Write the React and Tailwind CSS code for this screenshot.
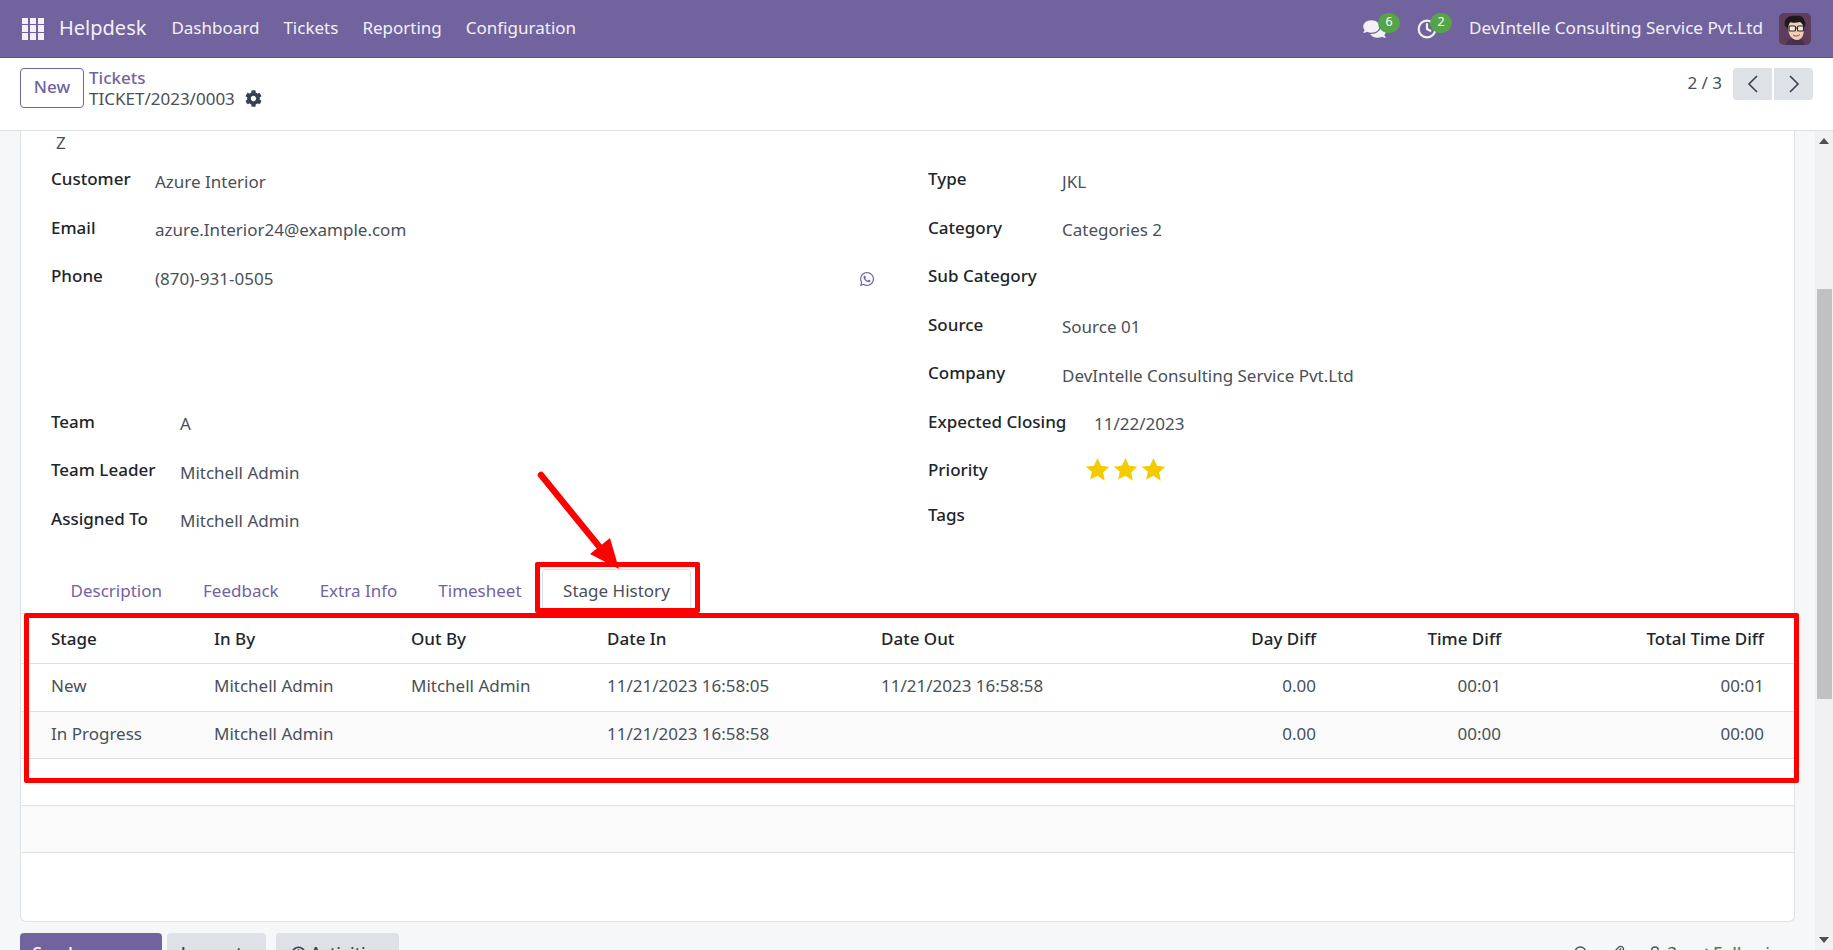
import React from "react";
import { Search, Paperclip, UserRound, Check, Clock } from "lucide-react";
import { FaWhatsapp, FaCog, FaComments } from "react-icons/fa";

const menu = ["Dashboard", "Tickets", "Reporting", "Configuration"];

const leftTop = [
  ["Customer", "Azure Interior"],
  ["Email", "azure.Interior24@example.com"],
  ["Phone", "(870)-931-0505"],
];

const leftBottom = [
  ["Team", "A"],
  ["Team Leader", "Mitchell Admin"],
  ["Assigned To", "Mitchell Admin"],
];

const rightRows = [
  ["Type", "JKL"],
  ["Category", "Categories 2"],
  ["Sub Category", ""],
  ["Source", "Source 01"],
  ["Company", "DevIntelle Consulting Service Pvt.Ltd"],
];

const tabs = ["Description", "Feedback", "Extra Info", "Timesheet"];

const historyRows = [
  ["New", "Mitchell Admin", "Mitchell Admin", "11/21/2023 16:58:05", "11/21/2023 16:58:58", "0.00", "00:01", "00:01"],
  ["In Progress", "Mitchell Admin", "", "11/21/2023 16:58:58", "", "0.00", "00:00", "00:00"],
];

const Star = () => (
  <svg viewBox="0 0 24 24" className="w-[25px] h-[25px] fill-[#f3cc00]">
    <path d="M12 1l3.4 7.3 7.9 1-5.8 5.5 1.5 7.9L12 17.9l-7 3.8 1.5-7.9L.7 9.3l7.9-1z" />
  </svg>
);

const AppsIcon = () => (
  <div className="grid grid-cols-3 gap-[1.5px] w-[22px] h-[22px]">
    {Array.from({ length: 9 }).map((_, i) => (
      <div key={i} className="bg-[#f3f1f7]" />
    ))}
  </div>
);

const Avatar = () => (
  <svg viewBox="0 0 32 32" className="w-[32px] h-[32px] rounded-[5px]">
    <rect width="32" height="32" fill="#5f3b5c" />
    <path d="M7 32c1-5 5-7 9-7s9 2 10 7z" fill="#46304d" />
    <path d="M9 14c0 8 4 13 9 13s7-5 7-12c0-5-3-7-8-7s-8 2-8 6z" fill="#f3cdb4" />
    <path d="M6 13C4 6 10 2 16 3c3-1 9 0 9 4 2 2 2 5 0 8-1-3-2-5-4-6-4 1-8 1-10 0-1 2-2 4-2 7-1-1-2-2-3-3z" fill="#1d1a1e" />
    <rect x="10" y="13" width="6.5" height="5" rx="1" fill="#f8ead9" stroke="#2a2a2a" strokeWidth="1.2" />
    <rect x="18.5" y="13" width="6" height="5" rx="1" fill="#f8ead9" stroke="#2a2a2a" strokeWidth="1.2" />
    <path d="M16.5 15h2" stroke="#2a2a2a" strokeWidth="1" />
    <path d="M14 22c2 1.5 5 1.5 7-.5" stroke="#8b4a3f" strokeWidth="1" fill="none" />
  </svg>
);

const Field = ({ label, value, labelWidth, children }) => (
  <div className="flex h-[48.5px] items-center">
    <div className={`${labelWidth} shrink-0 font-medium text-[#212529] -mt-[5px]`}>{label}</div>
    <div className="flex-1 text-[#495057]">{value}{children}</div>
  </div>
);

const App = () => {
  return (
    <div className="h-screen w-full overflow-hidden flex flex-col bg-white text-[17px] font-['Noto_Sans',sans-serif]">
      {/* navbar */}
      <div className="h-[58px] shrink-0 bg-[#71639e] border-b border-[#5f5385] flex items-center text-[#f3f1f7]">
        <div className="pl-[22px]"><AppsIcon /></div>
        <div className="ml-[15px] pb-[2px] text-[20px]">Helpdesk</div>
        <div className="ml-[25px] pb-[2px] flex gap-[24px]">
          {menu.map((m) => (
            <div key={m}>{m}</div>
          ))}
        </div>
        <div className="ml-auto flex items-center pr-[22px]">
          <div className="relative w-[22px] h-[20px]">
            <FaComments className="w-[23px] h-[20px] text-[#f3f1f7]" />
            <div className="absolute -top-[6px] left-[15px] w-[22px] h-[20px] rounded-full bg-[#55a548] text-white text-[12.5px] flex items-center justify-center">6</div>
          </div>
          <div className="relative w-[22px] h-[20px] ml-[32px]">
            <Clock className="w-[20px] h-[20px] text-[#f3f1f7]" strokeWidth={2.6} />
            <div className="absolute -top-[6px] left-[13px] w-[22px] h-[20px] rounded-full bg-[#55a548] text-white text-[12.5px] flex items-center justify-center">2</div>
          </div>
          <div className="ml-[30px] pb-[2px] text-[17.14px]">DevIntelle Consulting Service Pvt.Ltd</div>
          <div className="ml-[16px]"><Avatar /></div>
        </div>
      </div>

      {/* control panel */}
      <div className="h-[73px] shrink-0 border-b border-[#dee2e6] flex items-start pt-[10px] pl-[20px] pr-[20px]">
        <button className="w-[64px] h-[40px] pb-[2px] rounded-[4px] border border-[#71639e] text-[#71639e] font-medium">New</button>
        <div className="ml-[5px] leading-[21px] mt-[-1px]">
          <div className="text-[#71639e] font-medium">Tickets</div>
          <div className="flex items-center text-[#495057]">
            TICKET/2023/0003
            <FaCog className="ml-[10px] w-[17px] h-[17px] text-[#374151]" />
          </div>
        </div>
        <div className="ml-auto flex items-center">
          <div className="text-[#495057] mr-[11px] -mt-[2px]">2 / 3</div>
          <div className="w-[39px] h-[32px] bg-[#dee2e6] rounded-l-[4px] flex items-center justify-center">
            <svg viewBox="0 0 12 18" className="w-[12px] h-[18px] fill-none stroke-[#374151] stroke-[1.6]"><path d="M10 1L2 9l8 8" /></svg>
          </div>
          <div className="ml-[2px] w-[39px] h-[32px] bg-[#dee2e6] rounded-r-[4px] flex items-center justify-center">
            <svg viewBox="0 0 12 18" className="w-[12px] h-[18px] fill-none stroke-[#374151] stroke-[1.6]"><path d="M2 1l8 8-8 8" /></svg>
          </div>
        </div>
      </div>

      {/* content */}
      <div className="flex-1 min-h-0 flex overflow-hidden">
        <div className="flex-1 min-w-0 bg-[#f6f7f9] px-[20px] relative">
          <div className="h-[792px] bg-white border-x border-b border-[#dee2e6] rounded-b-[6px] relative">
            <div className="pl-[35px] text-[#495057] h-[26px] -mt-[1px]">Z</div>

            <div className="flex pl-[30px] mt-[1px]">
              <div className="w-[877px] pr-[53px]">
                {leftTop.map(([label, value]) => (
                  <Field key={label} label={label} value={value} labelWidth="w-[104px]">
                    {label === "Phone" && (
                      <FaWhatsapp className="inline-block float-right mt-[5px] w-[16px] h-[16px] text-[#71639e]" />
                    )}
                  </Field>
                ))}
                <div className="h-[97px]" />
                {leftBottom.map(([label, value]) => (
                  <Field key={label} label={label} value={value} labelWidth="w-[129px]" />
                ))}
              </div>
              <div className="flex-1">
                {rightRows.map(([label, value]) => (
                  <Field key={label} label={label} value={value} labelWidth="w-[134px]" />
                ))}
                <Field label="Expected Closing" value="11/22/2023" labelWidth="w-[166px]" />
                <div className="flex h-[44px] items-center">
                  <div className="w-[157px] shrink-0 font-medium text-[#212529]">Priority</div>
                  <div className="flex gap-[3px] -mt-[2px]">
                    <Star /><Star /><Star />
                  </div>
                </div>
                <div className="h-[44px] pt-[2px] font-medium text-[#212529] flex items-center">Tags</div>
              </div>
            </div>

            {/* tabs */}
            <div className="mt-[22.5px] h-[46px] border-b border-[#dee2e6] pl-[29px] flex items-end">
              {tabs.map((t) => (
                <div key={t} className="h-[44px] flex items-center px-[20.5px] text-[#71639e]">{t}</div>
              ))}
              <div className="h-[45px] -mb-[1px] flex items-center px-[20px] text-[#495057] bg-white border border-b-white border-[#dee2e6] rounded-t-[4px]">Stage History</div>
            </div>

            {/* stage history table */}
            <table className="w-full table-fixed border-collapse">
              <colgroup>
                <col className="w-[193px]" />
                <col className="w-[197px]" />
                <col className="w-[196px]" />
                <col className="w-[274px]" />
                <col className="w-[265px]" />
                <col className="w-[170px]" />
                <col className="w-[185px]" />
                <col />
              </colgroup>
              <thead>
                <tr className="h-[50px] border-b border-[#dee2e6] text-[#212529]">
                  <th className="pl-[30px] text-left font-medium">Stage</th>
                  <th className="text-left font-medium">In By</th>
                  <th className="text-left font-medium">Out By</th>
                  <th className="text-left font-medium">Date In</th>
                  <th className="text-left font-medium">Date Out</th>
                  <th className="text-right font-medium">Day Diff</th>
                  <th className="text-right font-medium">Time Diff</th>
                  <th className="text-right font-medium pr-[30px]">Total Time Diff</th>
                </tr>
              </thead>
              <tbody className="text-[#495057] [&_td]:pb-[3px]">
                {historyRows.map((r, i) => (
                  <tr key={r[0]} className={`h-[47.5px] border-b border-[#dee2e6] ${i === 1 ? "bg-[#fafafb]" : ""}`}>
                    <td className="pl-[30px]">{r[0]}</td>
                    <td>{r[1]}</td>
                    <td>{r[2]}</td>
                    <td>{r[3]}</td>
                    <td>{r[4]}</td>
                    <td className="text-right">{r[5]}</td>
                    <td className="text-right">{r[6]}</td>
                    <td className="text-right pr-[30px]">{r[7]}</td>
                  </tr>
                ))}
                <tr className="h-[47px] border-b border-[#dee2e6]"><td colSpan={8} /></tr>
                <tr className="h-[47px] border-b border-[#dee2e6] bg-[#fafafb]"><td colSpan={8} /></tr>
              </tbody>
            </table>

            {/* red annotations */}
            <div className="absolute left-[514px] top-[432px] w-[165px] h-[51px] border-[5px] border-[#ff0000] rounded-[2px]" />
            <div className="absolute left-[3px] top-[483px] w-[1775px] h-[170px] border-[5px] border-[#ff0000] rounded-[2px]" />
            <svg className="absolute left-[515px] top-[340px] w-[90px] h-[105px]" viewBox="0 0 90 105">
              <path d="M5 5L66 80" stroke="#ff0000" strokeWidth="6.5" strokeLinecap="round" />
              <path d="M54 84L74 68L83 99z" fill="#ff0000" />
            </svg>
          </div>

          {/* chatter */}
          <div className="mt-[11px] flex items-start">
            <div className="flex">
              <button className="w-[142px] h-[40px] bg-[#71639e] text-white rounded-[4px] font-medium">Send message</button>
              <button className="ml-[5px] w-[99px] h-[40px] bg-[#dee2e6] text-[#374151] rounded-[4px] font-medium">Log note</button>
              <button className="ml-[10px] w-[123px] h-[40px] bg-[#dee2e6] text-[#374151] rounded-[4px] font-medium flex items-center justify-center gap-[4px]">
                <Clock className="w-[15px] h-[15px]" strokeWidth={2.6} />Activities
              </button>
            </div>
            <div className="ml-auto flex items-center pt-[7px] pr-[4px] text-[#495057]">
              <Search className="w-[16px] h-[16px]" />
              <Paperclip className="ml-[21px] w-[16px] h-[16px]" />
              <UserRound className="ml-[21px] w-[16px] h-[16px]" />
              <span className="ml-[4px]">3</span>
              <span className="ml-[18px] flex items-center text-[#3f8f3a] font-medium">
                <Check className="w-[14px] h-[14px] mr-[4px]" strokeWidth={3} />Following
              </span>
            </div>
          </div>
        </div>

        {/* scrollbar */}
        <div className="w-[18px] shrink-0 bg-[#f1f1f1] flex flex-col items-center relative">
          <svg viewBox="0 0 10 6" className="w-[10px] h-[6px] mt-[7px] fill-[#505050]"><path d="M5 0l5 6H0z" /></svg>
          <div className="mt-[145px] w-[15px] h-[410px] bg-[#c1c1c1]" />
          <svg viewBox="0 0 10 6" className="w-[10px] h-[6px] mt-auto mb-[7px] fill-[#505050]"><path d="M5 6L0 0h10z" /></svg>
        </div>
      </div>
    </div>
  );
};

export default App;
